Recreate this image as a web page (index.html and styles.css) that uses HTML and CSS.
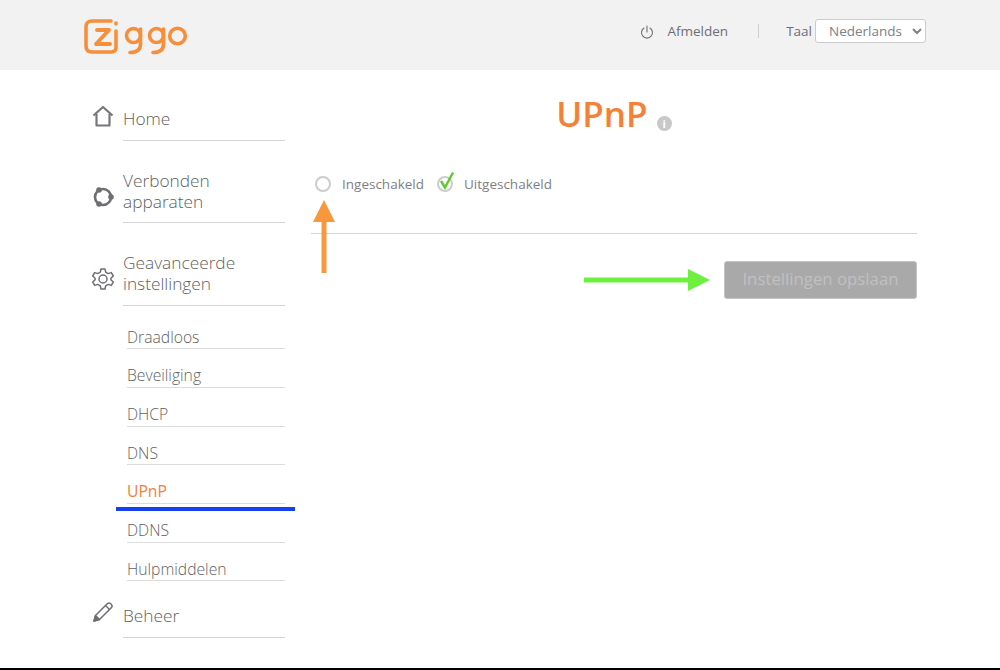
FILE: index.html
```html
<!DOCTYPE html>
<html lang="nl">
<head>
    <meta charset="UTF-8">
    <meta name="viewport" content="width=device-width, initial-scale=1.0">
    <title>UPnP</title>
    <link rel="stylesheet" href="styles.css">
</head>
<body>

    <div class="header">
        <svg class="logo" width="104" height="38" viewBox="0 0 104 38" role="img" aria-label="Ziggo" fill="none" stroke="#f58f3c" stroke-width="3.6" stroke-linecap="round" stroke-linejoin="round">
            <path d="M27 3H8Q2 3 2 9V28Q2 34 8 34H27Q32 34 32 29V13"/>
            <path d="M13 12H25L12 26H26" stroke-width="3.800"/>
            <path d="M32 5V6"/>
            <circle cx="49.500" cy="17.500" r="7"/>
            <path d="M56.500 11V26Q56.500 34.500 46 34.500"/>
            <circle cx="72.500" cy="17.500" r="7"/>
            <path d="M79.500 11V26Q79.500 34.500 69 34.500"/>
            <circle cx="93.500" cy="18" r="7.800"/>
        </svg>
        <div class="header-right">
            <svg class="power" width="14" height="14" viewBox="0 0 14 14" fill="none" stroke="#707070" stroke-width="1.1" stroke-linecap="round">
                <path d="M4 3A5.5 5.5 0 1 0 10 3"/>
                <path d="M7 1V7"/>
            </svg>
            <span class="logout">Afmelden</span>
            <span class="divider"></span>
            <span class="lang-label">Taal</span>
            <select class="lang">
                <option>Nederlands</option>
            </select>
        </div>
    </div>

    <div class="content">
        <div class="sidebar">
            <div class="nav-item nav-home">
                <svg class="nav-icon" width="24" height="24" viewBox="0 0 24 24" fill="none" stroke="#77777b" stroke-width="2.200" stroke-linejoin="round">
                    <path d="M2.500 11.500L12 3L21.500 11.500"/>
                    <path d="M5.500 10V21.500H18.500V10"/>
                </svg>
                <span class="nav-text">Home</span>
            </div>
            <div class="nav-item nav-devices">
                <svg class="nav-icon" width="24" height="24" viewBox="0 0 24 24" fill="none" stroke="#6f6f73" stroke-width="2.600">
                    <circle cx="12" cy="12" r="8"/>
                    <circle cx="8" cy="5" r="2.800" fill="#6f6f73" stroke="none"/>
                    <circle cx="20" cy="12" r="2.800" fill="#6f6f73" stroke="none"/>
                    <circle cx="8" cy="19" r="2.800" fill="#6f6f73" stroke="none"/>
                </svg>
                <span class="nav-text">Verbonden<br>apparaten</span>
            </div>
            <div class="nav-item nav-settings">
                <svg class="nav-icon" width="24" height="24" viewBox="0 0 24 24" fill="none" stroke="#6f6f73" stroke-width="1.500" stroke-linejoin="round">
                    <circle cx="12" cy="12" r="4"/>
                    <path d="M10 2H14L14.700 5.200L17.200 6.600L20.300 5.600L22.300 9L19.900 11.200V12.800L22.300 15L20.300 18.400L17.200 17.400L14.700 18.800L14 22H10L9.300 18.800L6.800 17.400L3.700 18.400L1.700 15L4.100 12.800V11.200L1.700 9L3.700 5.600L6.800 6.600L9.300 5.200Z"/>
                </svg>
                <span class="nav-text">Geavanceerde<br>instellingen</span>
            </div>
            <div class="sub-nav">
                <div class="sub-item">Draadloos</div>
                <div class="sub-item">Beveiliging</div>
                <div class="sub-item">DHCP</div>
                <div class="sub-item">DNS</div>
                <div class="sub-item active">UPnP</div>
                <div class="sub-item">DDNS</div>
                <div class="sub-item">Hulpmiddelen</div>
            </div>
            <div class="nav-item nav-manage">
                <svg class="nav-icon" width="24" height="24" viewBox="0 0 24 24" fill="none" stroke="#6f6f73" stroke-width="1.500" stroke-linejoin="round">
                    <path d="M3 21L4.500 15.500L16.500 3.500Q18 2.200 20 4Q22 6 20.500 7.500L8.500 19.500Z"/>
                    <path d="M14.500 5.500L18.500 9.500"/>
                    <path d="M3 21L4.500 15.500L8.500 19.500Z" fill="#6f6f73"/>
                </svg>
                <span class="nav-text">Beheer</span>
            </div>
        </div>

        <div class="main">
            <div class="title-row">
                <h1>UPnP</h1>
                <span class="info">i</span>
            </div>
            <div class="options">
                <span class="radio"></span>
                <span class="option-label">Ingeschakeld</span>
                <span class="radio checked">
                    <svg class="check" width="18" height="19" viewBox="0 0 18 19" fill="none" stroke="#5fc92e" stroke-width="2.400">
                        <path d="M3 10L7 16.500L15 1.500"/>
                    </svg>
                </span>
                <span class="option-label">Uitgeschakeld</span>
            </div>
            <div class="actions">
                <button class="save" disabled>Instellingen opslaan</button>
            </div>
        </div>
    </div>

    <div class="bottom-line"></div>

    <!-- annotations on top of the screenshot -->
    <div class="mark-blue"></div>
    <svg class="arrow-orange" width="24" height="74" viewBox="0 0 24 74" fill="#f7983c">
        <path d="M12 0L23 22H14.500V73H9.500V22H1Z"/>
    </svg>
    <svg class="arrow-green" width="128" height="24" viewBox="0 0 128 24" fill="#6df03f">
        <path d="M0 9.500H104V1L126 12L104 23V14.500H0Z"/>
    </svg>

</body>
</html>
```

FILE: styles.css
```css
body {
    margin: 0;
    height: 670px;
    overflow: hidden;
    display: flex;
    flex-direction: column;
    position: relative;
    font-family: "Open Sans", "Noto Sans", sans-serif;
    font-weight: 300;
    color: #5f5f63;
    background-color: white;
}
.header {
    height: 70px;
    flex: none;
    box-sizing: border-box;
    padding: 18px 74px 0 84px;
    display: flex;
    justify-content: space-between;
    align-items: flex-start;
    background-color: #f2f2f2;
}
.header-right {
    display: flex;
    align-items: center;
    height: 26px;
    font-size: 13.500px;
    font-weight: 400;
    color: #6e6e72;
}
.power {
    margin-right: 13px;
    margin-top: 2px;
}
.logout {
    margin-right: 30px;
}
.divider {
    width: 1px;
    height: 14px;
    margin-right: 27px;
    background-color: #cfcfcf;
}
.lang-label {
    margin-right: 3px;
}
.lang {
    width: 111px;
    height: 24px;
    padding: 0 0 0 9px;
    font-family: inherit;
    font-size: 13.500px;
    color: #808084;
    background-color: white;
    border: 1px solid #cccccc;
    border-radius: 3px;
}
.content {
    flex: 1;
    display: flex;
}
.sidebar {
    width: 285px;
    flex: none;
    box-sizing: border-box;
    padding-left: 91px;
}
.nav-item {
    display: flex;
    align-items: center;
    font-size: 17.300px;
    line-height: 21px;
}
.nav-icon {
    width: 24px;
    flex: none;
    margin-right: 8px;
}
.nav-text {
    flex: 1;
}
.nav-home {
    margin-top: 33px;
    height: 38px;
}
.nav-home .nav-text {
    height: 37px;
    line-height: 32px;
    border-bottom: 1px solid #d5d5d5;
}
.nav-home .nav-icon {
    margin-top: -13px;
}
.nav-devices {
    margin-top: 29px;
}
.nav-settings {
    margin-top: 29px;
}
.nav-devices .nav-text {
    padding-bottom: 10px;
    border-bottom: 1px solid #d5d5d5;
}
.nav-settings .nav-text {
    padding-bottom: 11px;
    border-bottom: 1px solid #d5d5d5;
}
.sub-nav {
    margin-top: 4.500px;
    margin-left: 36px;
}
.sub-item {
    height: 38.700px;
    box-sizing: border-box;
    padding-top: 16px;
    line-height: 20px;
    font-size: 15.700px;
    border-bottom: 1px solid #dcdcdc;
}
.sub-item.active {
    font-weight: 400;
    color: #f58138;
}
.nav-manage {
    margin-top: 18.500px;
}
.nav-manage .nav-text {
    height: 37px;
    line-height: 32px;
    border-bottom: 1px solid #d5d5d5;
}
.nav-manage .nav-icon {
    margin-top: -14px;
}
.main {
    width: 606px;
    margin-left: 26px;
}
.title-row {
    display: flex;
    justify-content: center;
    align-items: flex-end;
    margin-top: 20px;
    height: 48px;
}
h1 {
    margin: 0;
    font-size: 35px;
    line-height: 48px;
    font-weight: 600;
    color: #f58138;
}
.info {
    width: 15px;
    height: 15px;
    margin: 0 0 7px 9px;
    border-radius: 50%;
    background-color: #c8c8c8;
    color: white;
    font-size: 11px;
    font-weight: 700;
    line-height: 15px;
    text-align: center;
}
.options {
    display: flex;
    align-items: center;
    height: 96px;
    padding: 0 0 4px 4px;
    box-sizing: border-box;
    font-size: 13.500px;
    font-weight: 400;
    color: #808084;
    border-bottom: 1px solid #d5d5d5;
}
.radio {
    width: 16px;
    height: 16px;
    box-sizing: border-box;
    flex: none;
    position: relative;
    border: 2px solid #cccccc;
    border-radius: 50%;
}
.check {
    position: absolute;
    left: -1px;
    top: -7px;
}
.option-label {
    margin: 0 13px 0 11px;
}
.actions {
    display: flex;
    justify-content: flex-end;
    margin-top: 27px;
}
.save {
    width: 193px;
    height: 38px;
    padding: 0 0 3px 0;
    font-family: inherit;
    font-size: 16.800px;
    font-weight: 400;
    color: #c0c0c0;
    background-color: #a9a9a9;
    border: 1px solid #c4c4c4;
    border-radius: 3px;
}
.bottom-line {
    height: 2px;
    flex: none;
    background-color: black;
}
.mark-blue {
    position: absolute;
    left: 116px;
    top: 507px;
    width: 179px;
    height: 4px;
    background-color: #1540f0;
}
.arrow-orange {
    position: absolute;
    left: 312px;
    top: 200px;
}
.arrow-green {
    position: absolute;
    left: 584px;
    top: 268px;
}
```
